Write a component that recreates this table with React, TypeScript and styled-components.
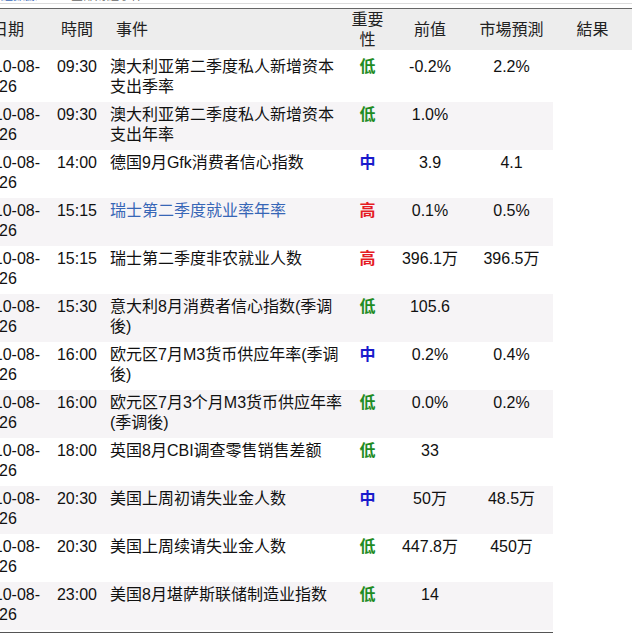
import React from 'react';
import styled, { createGlobalStyle } from 'styled-components';

const GlobalStyle = createGlobalStyle`
  html, body { margin: 0; padding: 0; background: #fff; }
  body {
    font-family: "Liberation Sans", "Noto Sans CJK SC", sans-serif;
    color: #111;
    overflow: hidden;
  }
`;

const COLS = '84px 54px 241px 45px 80px 83px 79px';
const BODY_COLS = '84px 54px 241px 45px 80px 83px';

type Level = '低' | '中' | '高';

const LEVEL_COLOR: Record<Level, string> = {
  低: '#1f8c24',
  中: '#1a1acc',
  高: '#e51c23',
};

interface EventRow {
  date: string;
  time: string;
  name: string;
  link?: boolean;
  level: Level;
  prev: string;
  forecast: string;
}

const rows: EventRow[] = [
  { date: '2010-08-26', time: '09:30', name: '澳大利亚第二季度私人新增资本支出季率', level: '低', prev: '-0.2%', forecast: '2.2%' },
  { date: '2010-08-26', time: '09:30', name: '澳大利亚第二季度私人新增资本支出年率', level: '低', prev: '1.0%', forecast: '' },
  { date: '2010-08-26', time: '14:00', name: '德国9月Gfk消费者信心指数', level: '中', prev: '3.9', forecast: '4.1' },
  { date: '2010-08-26', time: '15:15', name: '瑞士第二季度就业率年率', link: true, level: '高', prev: '0.1%', forecast: '0.5%' },
  { date: '2010-08-26', time: '15:15', name: '瑞士第二季度非农就业人数', level: '高', prev: '396.1万', forecast: '396.5万' },
  { date: '2010-08-26', time: '15:30', name: '意大利8月消费者信心指数(季调後)', level: '低', prev: '105.6', forecast: '' },
  { date: '2010-08-26', time: '16:00', name: '欧元区7月M3货币供应年率(季调後)', level: '中', prev: '0.2%', forecast: '0.4%' },
  { date: '2010-08-26', time: '16:00', name: '欧元区7月3个月M3货币供应年率(季调後)', level: '低', prev: '0.0%', forecast: '0.2%' },
  { date: '2010-08-26', time: '18:00', name: '英国8月CBI调查零售销售差额', level: '低', prev: '33', forecast: '' },
  { date: '2010-08-26', time: '20:30', name: '美国上周初请失业金人数', level: '中', prev: '50万', forecast: '48.5万' },
  { date: '2010-08-26', time: '20:30', name: '美国上周续请失业金人数', level: '低', prev: '447.8万', forecast: '450万' },
  { date: '2010-08-26', time: '23:00', name: '美国8月堪萨斯联储制造业指数', level: '低', prev: '14', forecast: '' },
];

const Page = styled.div`
  width: 666px;
  margin-left: -34px;
`;

const TabStrip = styled.div`
  height: 3px;
  overflow: hidden;
  display: flex;
  align-items: flex-end;
  gap: 34px;
  padding-left: 23px;
  border-bottom: 1px solid #dcdcdc;
`;

const TabText = styled.span<{ $active?: boolean }>`
  flex: none;
  font-size: 12px;
  line-height: 14px;
  color: ${(p) => (p.$active ? '#3a68b8' : '#666')};
`;

const HeaderRow = styled.div`
  margin-top: 4px;
  border-top: 1px solid #666;
  background: #ededed;
  display: grid;
  grid-template-columns: ${COLS};
  height: 41px;
  align-items: center;
  font-family: "Liberation Sans", "Noto Sans CJK TC", sans-serif;
  font-size: 16px;
  line-height: 20px;
  color: #222;
`;

const HeaderCell = styled.div<{ $indent?: number }>`
  text-align: ${(p) => (p.$indent === undefined ? 'center' : 'left')};
  padding: ${(p) => (p.$indent === undefined ? '0 5px' : `0 0 0 ${p.$indent}px`)};
`;

const Body = styled.div`
  width: 587px;
  padding: 4px 0 2px;
  border-bottom: 1px solid #555;
`;

const Row = styled.div<{ $striped: boolean }>`
  display: grid;
  grid-template-columns: ${BODY_COLS};
  box-sizing: border-box;
  height: 48px;
  padding-top: 3px;
  background: ${(p) => (p.$striped ? '#f6f4f6' : '#fff')};
  font-size: 16px;
  line-height: 20px;
  color: #111;
`;

const CenterCell = styled.div`
  text-align: center;
  white-space: nowrap;
`;

const EventCell = styled.div<{ $link?: boolean }>`
  padding-left: 6px;
  color: ${(p) => (p.$link ? '#3766b6' : '#111')};
`;

const LevelCell = styled.div<{ $color: string }>`
  text-align: center;
  font-weight: bold;
  color: ${(p) => p.$color};
`;

export default function App() {
  return (
    <>
      <GlobalStyle />
      <Page>
        <TabStrip>
          <TabText $active>財經數據</TabText>
          <TabText>全部財經事件</TabText>
        </TabStrip>
        <HeaderRow>
          <HeaderCell>日期</HeaderCell>
          <HeaderCell>時間</HeaderCell>
          <HeaderCell $indent={12}>事件</HeaderCell>
          <HeaderCell>重要性</HeaderCell>
          <HeaderCell>前值</HeaderCell>
          <HeaderCell>市場預測</HeaderCell>
          <HeaderCell>結果</HeaderCell>
        </HeaderRow>
        <Body>
          {rows.map((r, i) => (
            <Row key={i} $striped={i % 2 === 1}>
              <CenterCell>
                {r.date.slice(0, 8)}
                <br />
                {r.date.slice(8)}
              </CenterCell>
              <CenterCell>{r.time}</CenterCell>
              <EventCell $link={r.link}>{r.name}</EventCell>
              <LevelCell $color={LEVEL_COLOR[r.level]}>{r.level}</LevelCell>
              <CenterCell>{r.prev}</CenterCell>
              <CenterCell>{r.forecast}</CenterCell>
            </Row>
          ))}
        </Body>
      </Page>
    </>
  );
}
